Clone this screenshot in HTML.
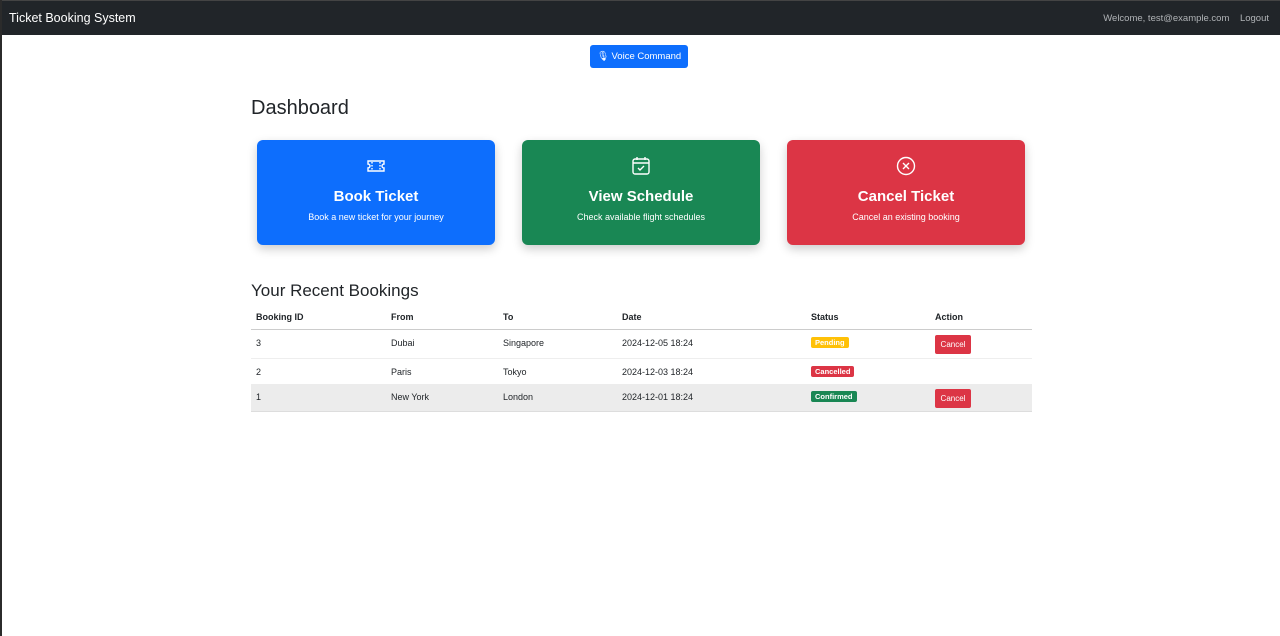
<!DOCTYPE html>
<html><head><style>
*{box-sizing:border-box;margin:0;padding:0}
body{width:1280px;height:636px;background:#fff;font-family:"Liberation Sans",sans-serif;color:#212529;position:relative;overflow:hidden}
.lb{position:absolute;left:0;top:0;width:2px;height:636px;background:#2b2b2b}
.nav{position:absolute;left:0;top:0;width:1280px;height:35px;background:#212529;border-top:1px solid #444}
.nav .brand{position:absolute;left:9px;top:10px;color:#fff;font-size:12.5px}
.nav .r{position:absolute;right:11px;top:12px;color:#b0b3b6;font-size:9.5px}
.vc{position:absolute;left:590px;top:45px;width:98px;height:23px;background:#0d6efd;color:#fff;font-size:9.5px;border-radius:3px;text-align:center;line-height:23px}
h2{position:absolute;font-weight:500;font-size:20px}
.card{position:absolute;top:140px;width:238px;height:105px;border-radius:6px;color:#fff;text-align:center;box-shadow:0 4px 10px rgba(0,0,0,.2)}
.card svg{position:absolute;left:109px;top:16px}
.card .t{position:absolute;top:48px;width:100%;font-size:15px;font-weight:bold}
.card .s{position:absolute;top:72px;width:100%;font-size:9px}
.tb{position:absolute;left:251px;width:781px;font-size:9px}
.row{position:absolute;left:0;width:781px}
.row span{position:absolute}
.b{padding:1px 4px;border-radius:2px;color:#fff;font-size:7.5px;font-weight:bold}
.btn{background:#dc3545;color:#fff;border-radius:2px;width:36px;height:19px;line-height:19px;text-align:center;font-size:8px}
</style></head><body>
<div class="nav"><span class="brand">Ticket Booking System</span><span class="r">Welcome, test@example.com &nbsp;&nbsp;&nbsp;Logout</span></div>
<div class="lb"></div>
<div class="vc">&#x1F399;&#xFE0E; Voice Command</div>
<h2 style="left:251px;top:97px">Dashboard</h2>
<div class="card" style="left:257px;background:#0d6efd"><svg width="20" height="20" viewBox="0 0 20 20" fill="none" stroke="#fff" stroke-width="1.4"><path d="M2 5h16v3a2 2 0 0 0 0 4v3H2v-3a2 2 0 0 0 0-4z"/><path d="M6 6v8M14 6v8" stroke-dasharray="1.5 1.5"/></svg><div class="t">Book Ticket</div><div class="s">Book a new ticket for your journey</div></div>
<div class="card" style="left:522px;background:#198754"><svg width="20" height="20" viewBox="0 0 20 20" fill="none" stroke="#fff" stroke-width="1.4"><rect x="2" y="3" width="16" height="15" rx="2"/><path d="M2 7h16M6 1v3M14 1v3M7 12l2 2 4-4"/></svg><div class="t">View Schedule</div><div class="s">Check available flight schedules</div></div>
<div class="card" style="left:787px;background:#dc3545"><svg width="20" height="20" viewBox="0 0 20 20" fill="none" stroke="#fff" stroke-width="1.4"><circle cx="10" cy="10" r="8.5"/><path d="M7 7l6 6M13 7l-6 6"/></svg><div class="t">Cancel Ticket</div><div class="s">Cancel an existing booking</div></div>
<h2 style="left:251px;top:281px;font-size:17px">Your Recent Bookings</h2>
<div class="tb" style="top:312px">
<div class="row" style="top:0;height:18px;border-bottom:1px solid #ccc;font-weight:bold"><span style="left:5px">Booking ID</span><span style="left:140px">From</span><span style="left:252px">To</span><span style="left:371px">Date</span><span style="left:560px">Status</span><span style="left:684px">Action</span></div>
<div class="row" style="top:18px;height:29px;border-bottom:1px solid #eee"><span style="left:5px;top:8px">3</span><span style="left:140px;top:8px">Dubai</span><span style="left:252px;top:8px">Singapore</span><span style="left:371px;top:8px">2024-12-05 18:24</span><span class="b" style="left:560px;top:7px;background:#ffc107">Pending</span><span class="btn" style="left:684px;top:5px">Cancel</span></div>
<div class="row" style="top:47px;height:25px"><span style="left:5px;top:8px">2</span><span style="left:140px;top:8px">Paris</span><span style="left:252px;top:8px">Tokyo</span><span style="left:371px;top:8px">2024-12-03 18:24</span><span class="b" style="left:560px;top:7px;background:#dc3545">Cancelled</span></div>
<div class="row" style="top:72px;height:28px;background:#ececec;border-bottom:1px solid #ddd"><span style="left:5px;top:8px">1</span><span style="left:140px;top:8px">New York</span><span style="left:252px;top:8px">London</span><span style="left:371px;top:8px">2024-12-01 18:24</span><span class="b" style="left:560px;top:7px;background:#198754">Confirmed</span><span class="btn" style="left:684px;top:5px">Cancel</span></div>
</div>
</body></html>
